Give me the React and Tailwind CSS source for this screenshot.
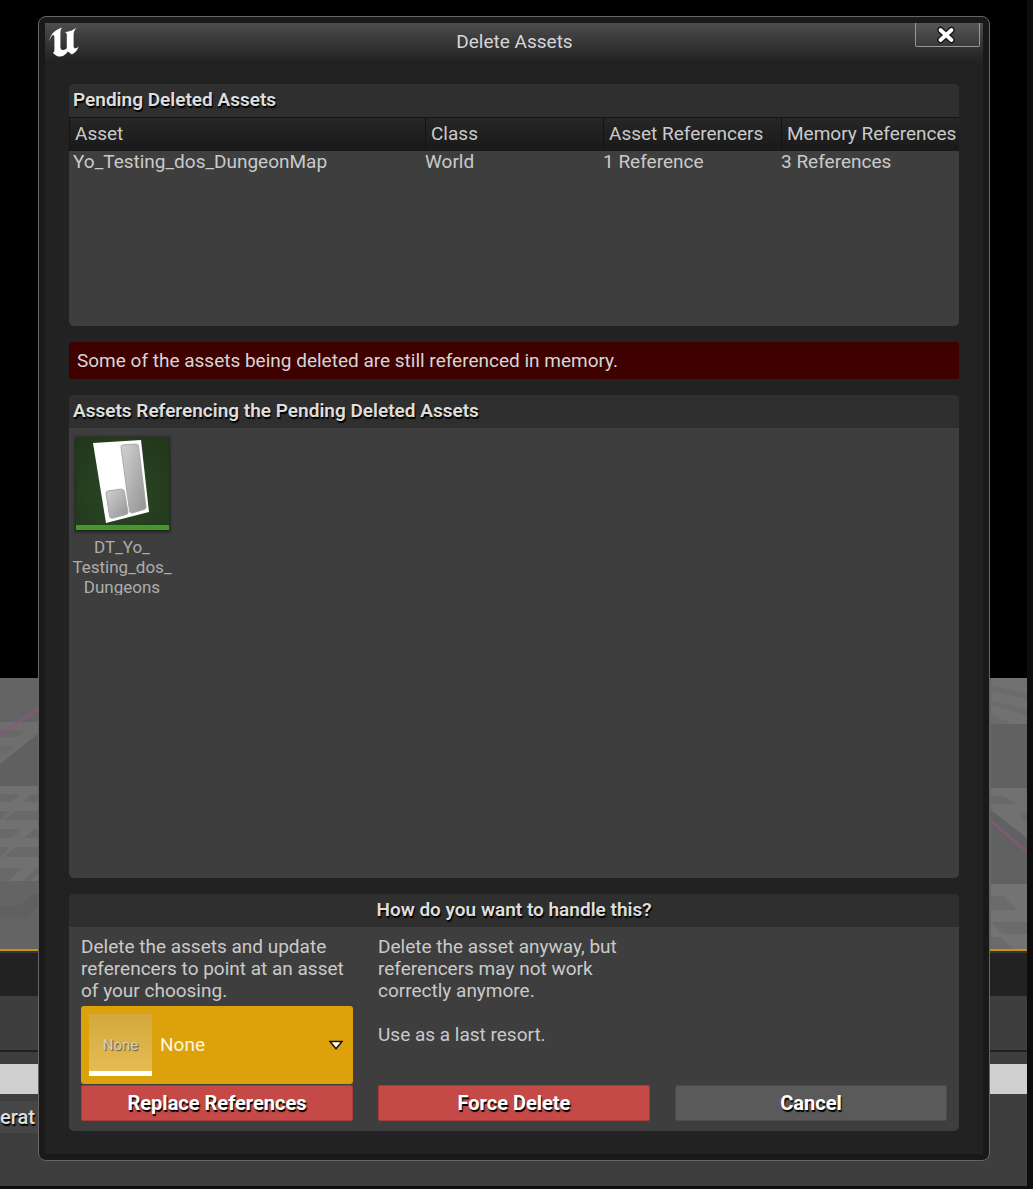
import { useState } from "react";

const assets = [
  {
    name: "Yo_Testing_dos_DungeonMap",
    type: "World",
    assetRefs: "1 Reference",
    memoryRefs: "3 References",
  },
];

const columns = ["Asset", "Class", "Asset Referencers", "Memory References"];

function Logo() {
  return (
    <svg viewBox="0 0 30 30" className="mt-1 h-[30px] w-[30px]" fill="#fff" aria-hidden>
      <path d="M0 14.500C1.500 7.500 6 2.500 13 .8c-1.400 1.700-1.600 3.500-1.600 5.800v13.200c0 2.200 1 3.200 2.400 3.200 1.500 0 3-.8 4-1.800V7.600c0-1.300-.6-2-2-2.400 4.400-.6 8.600-2 11.800-4.400-2.300 2.600-3 4.400-3 7v11.200c0 1.500.8 2.300 1.900 2.300 1.200 0 2.300-1 3.200-2-1 3.800-3.600 6.700-6.800 8.200l-4-3.100c-1.800 2.600-4 4.600-7.300 5.100-2.800.1-5.200-1-7.600-3.600l.8-.8c.5-.6.6-1.200.6-2.200V10c0-1.300-.5-2-1.500-1.900C2.800 8.500 1.400 11 0 14.500z" />
    </svg>
  );
}

function CloseIcon() {
  return (
    <svg viewBox="0 0 22 22" className="h-[22px] w-[22px]" strokeLinecap="round" aria-hidden>
      <path d="M5.500 6l11 10M16.500 6l-11 10" stroke="#161616" strokeWidth="6.500" />
      <path d="M5.500 6l11 10M16.500 6l-11 10" stroke="#fff" strokeWidth="3.800" />
    </svg>
  );
}

function DataTableThumbnail() {
  return (
    <svg viewBox="0 0 93 93" className="h-[93px] w-[93px] shadow-[0_1px_3px_1px_rgba(0,0,0,0.5)]" aria-hidden>
      <defs>
        <radialGradient id="tile" cx="50%" cy="60%" r="75%">
          <stop offset="0" stopColor="#2b4724" />
          <stop offset="1" stopColor="#21371b" />
        </radialGradient>
        <linearGradient id="bar" x1="0" y1="0" x2="1" y2="1">
          <stop offset="0" stopColor="#d2d2d2" />
          <stop offset="1" stopColor="#939393" />
        </linearGradient>
      </defs>
      <rect width="93" height="93" fill="url(#tile)" />
      <path d="M17 6L65 3l8 72-43 11z" fill="#fff" />
      <path d="M47 8l13-1q2 0 2.500 2L70 70q0 2-2 2.500L56 76q-2 0-2.500-2L45 10q0-2 2-2z" fill="url(#bar)" stroke="#a8a8a8" />
      <path d="M32 54l13-2q3 0 3.500 3L52 75q0 2-2 2.500L37 81q-3 1-3.500-2L30 56q0-2 2-2z" fill="url(#bar)" stroke="#a8a8a8" />
      <rect y="88" width="93" height="5" fill="#43992a" />
    </svg>
  );
}

function Panel({ title, centered, children }) {
  return (
    <section className="overflow-hidden rounded-[5px] bg-[#3e3e3e]">
      <h2
        className={`h-[33px] bg-[#2f2f2f] px-1 pt-1 text-[19px] leading-6 font-semibold text-[#dedede] [text-shadow:1px_2px_1px_#000] ${
          centered ? "text-center" : ""
        }`}
      >
        {title}
      </h2>
      {children}
    </section>
  );
}

function ActionButton({ children, danger, onClick }) {
  return (
    <button
      type="button"
      onClick={onClick}
      className={`h-9 w-full rounded-[2px] border text-xl leading-6 font-bold text-white [text-shadow:1px_2px_1px_#000] ${
        danger ? "border-[#a83c3a] bg-[#c54a47]" : "border-[#4c4c4c] bg-[#5a5a5a]"
      }`}
    >
      {children}
    </button>
  );
}

function FloorLeft() {
  return (
    <svg viewBox="0 0 38 271" className="h-[271px] w-[38px]">
      <rect width="38" height="271" fill="#646464" />
      <path d="M0 44h38v12L0 86z" fill="#6e6e6e" />
      <path d="M0 52h28l-10 7H0zM0 68h16l-10 7H0z" fill="#696969" />
      <path d="M0 86l38-30v52H0z" fill="#606060" />
      <path d="M0 108h38v95H0z" fill="#717171" />
      <path
        d="M0 116h20l-9 8H0zM32 116h6v8H22zM0 133h10l-9 9H0zM14 133h24v9H4zM0 151h22l-10 9H0zM34 151h4v9H24zM0 169h10l-10 10zM16 169h22v10H4zM0 190h22l-13 13H0zM36 190h2v7l-9 6h-6z"
        fill="#696969"
      />
      <path d="M0 228h18l14-12h6v12l-12 13H0z" fill="#606060" />
      <path d="M0 56L38 31" stroke="#85577f" strokeWidth="2" />
    </svg>
  );
}

function FloorRight() {
  return (
    <svg viewBox="0 0 36 271" className="h-[271px] w-9">
      <rect width="36" height="271" fill="#616161" />
      <path d="M0 0h36v46H0z" fill="#717171" />
      <path d="M0 8l36 8v5L0 13zM0 22l36 10v5L0 27zM0 37l22 9H0z" fill="#6b6b6b" />
      <path d="M0 110h36v50L0 132z" fill="#717171" />
      <path d="M0 118h12l14 8H0zM28 135h8v8h-2z" fill="#696969" />
      <path d="M0 206h36v65H0z" fill="#737373" />
      <path d="M0 218h12l14 14H0zM0 244l36 0v12H12L0 244zM0 259h10l12 12H0z" fill="#6b6b6b" />
      <path d="M0 143l36 31" stroke="#85577f" strokeWidth="2" />
    </svg>
  );
}

// editor window that stays visible around the dialog
function EditorBackdrop() {
  return (
    <div className="flex flex-col border-r-[6px] border-[#0d0d0d] bg-black [grid-area:1/1]" aria-hidden>
      <div className="h-[678px]" />
      <div className="flex justify-between bg-[#656565]">
        <FloorLeft />
        <FloorRight />
      </div>
      <div className="h-1 border-t-2 border-[#c8930f] bg-[#35353f]" />
      <div className="h-[43px] bg-[#222]" />
      <div className="h-14 border-b-2 border-[#222] bg-[#3e3e3e]" />
      <div className="h-3 bg-[#3e3e3e]" />
      <div className="h-[30px] bg-[#cfcfcf]" />
      <div className="flex-1 border-b-[3px] border-[#0d0d0d] bg-[#3e3e3e] pt-[7px]">
        <div className="h-8 w-[38px] bg-[#464646] pt-1 text-xl leading-6 font-medium text-[#dedede] [text-shadow:1px_2px_1px_#000]">
          erat
        </div>
      </div>
    </div>
  );
}

export default function App() {
  const [open, setOpen] = useState(true);
  const close = () => setOpen(false);

  return (
    <div className="grid min-h-screen font-[Roboto,sans-serif]">
      <EditorBackdrop />

      {open && (
        <div className="pt-4 pr-[43px] pb-7 pl-[38px] [grid-area:1/1]">
          <div
            role="dialog"
            aria-labelledby="dialog-title"
            className="rounded-lg border border-[#666] bg-[#191919] p-1.5 text-[19px] leading-[22px] text-[#cacaca]"
          >
            <div className="bg-[#222] pb-[23px]">
              <header className="grid h-[37px] grid-cols-[1fr_auto_1fr] items-start bg-linear-to-b from-[#4d4d4d] to-[#242424] pr-[3px] pl-1">
                <Logo />
                <h1 id="dialog-title" className="self-center text-[#d6d6d6]">
                  Delete Assets
                </h1>
                <button
                  type="button"
                  aria-label="Close"
                  onClick={close}
                  className="flex h-6 w-[65px] items-center justify-center justify-self-end rounded-b-[2px] border border-t-0 border-[#999] bg-linear-to-b from-[#565656] to-[#3a3a3a] pr-1"
                >
                  <CloseIcon />
                </button>
              </header>

              <div className="flex flex-col gap-4 px-6 pt-6">
                <Panel title="Pending Deleted Assets">
                  <div className="h-[209px] overflow-auto">
                    <table className="w-full table-fixed text-left">
                      <thead>
                        <tr className="h-[34px] bg-linear-to-b from-[#272727] to-[#191919]">
                          {columns.map((col, i) => (
                            <th
                              key={col}
                              className={`p-0 pb-px pl-1.5 font-normal whitespace-nowrap shadow-[inset_1px_1px_0_#141414] ${
                                i === 0 ? "w-2/5" : "w-1/5"
                              }`}
                            >
                              {col}
                            </th>
                          ))}
                        </tr>
                      </thead>
                      <tbody>
                        {assets.map((asset) => (
                          <tr key={asset.name}>
                            <td className="p-0 pl-1">{asset.name}</td>
                            <td className="p-0">{asset.type}</td>
                            <td className="p-0">{asset.assetRefs}</td>
                            <td className="p-0">{asset.memoryRefs}</td>
                          </tr>
                        ))}
                      </tbody>
                    </table>
                  </div>
                </Panel>

                <p className="h-[37px] rounded-[3px] bg-[#3f0000] px-2 py-2 text-[#d6d6d6]">
                  Some of the assets being deleted are still referenced in memory.
                </p>

                <Panel title="Assets Referencing the Pending Deleted Assets">
                  <div className="h-[450px] px-[3px] pt-[9px]">
                    <figure className="flex w-[100px] flex-col items-center">
                      <DataTableThumbnail />
                      <figcaption className="mt-[7px] h-[58px] overflow-hidden text-center text-[17px] leading-5 text-[#adadad]">
                        DT_Yo_
                        <br />
                        Testing_dos_
                        <br />
                        Dungeons
                      </figcaption>
                    </figure>
                  </div>
                </Panel>

                <Panel title="How do you want to handle this?" centered>
                  <div className="grid grid-cols-3 gap-[25px] px-3 pt-[9px] pb-2.5">
                    <div className="flex flex-col">
                      <p className="mb-1">
                        Delete the assets and update referencers to point at an asset of your choosing.
                      </p>
                      <label className="relative mb-px flex h-[78px] items-center rounded-[3px] bg-[#dda20b] px-2">
                        <span className="flex h-[62px] w-[63px] items-center justify-center border-b-[5px] border-white bg-linear-to-b from-[#d3a93d] to-[#e4bc52] pt-1 text-[15px] text-[#d8cfb4] [text-shadow:1px_1px_1px_#555]">
                          None
                        </span>
                        <select
                          aria-label="Replacement asset"
                          className="h-full flex-1 appearance-none bg-transparent pl-2 text-[#fff6dc] outline-none"
                        >
                          <option>None</option>
                        </select>
                        <svg viewBox="0 0 14 10" className="pointer-events-none absolute right-2.5 h-2.5 w-3.5" aria-hidden>
                          <path d="M1 1.500h12L7 8.800z" fill="#fff" stroke="#1b1503" strokeWidth="1.500" />
                        </svg>
                      </label>
                      <ActionButton danger onClick={close}>
                        Replace References
                      </ActionButton>
                    </div>

                    <div className="flex flex-col justify-between">
                      <div className="flex flex-col gap-[22px] pr-6">
                        <p>Delete the asset anyway, but referencers may not work correctly anymore.</p>
                        <p>Use as a last resort.</p>
                      </div>
                      <ActionButton danger onClick={close}>
                        Force Delete
                      </ActionButton>
                    </div>

                    <div className="flex flex-col justify-end">
                      <ActionButton onClick={close}>Cancel</ActionButton>
                    </div>
                  </div>
                </Panel>
              </div>
            </div>
          </div>
        </div>
      )}
    </div>
  );
}
